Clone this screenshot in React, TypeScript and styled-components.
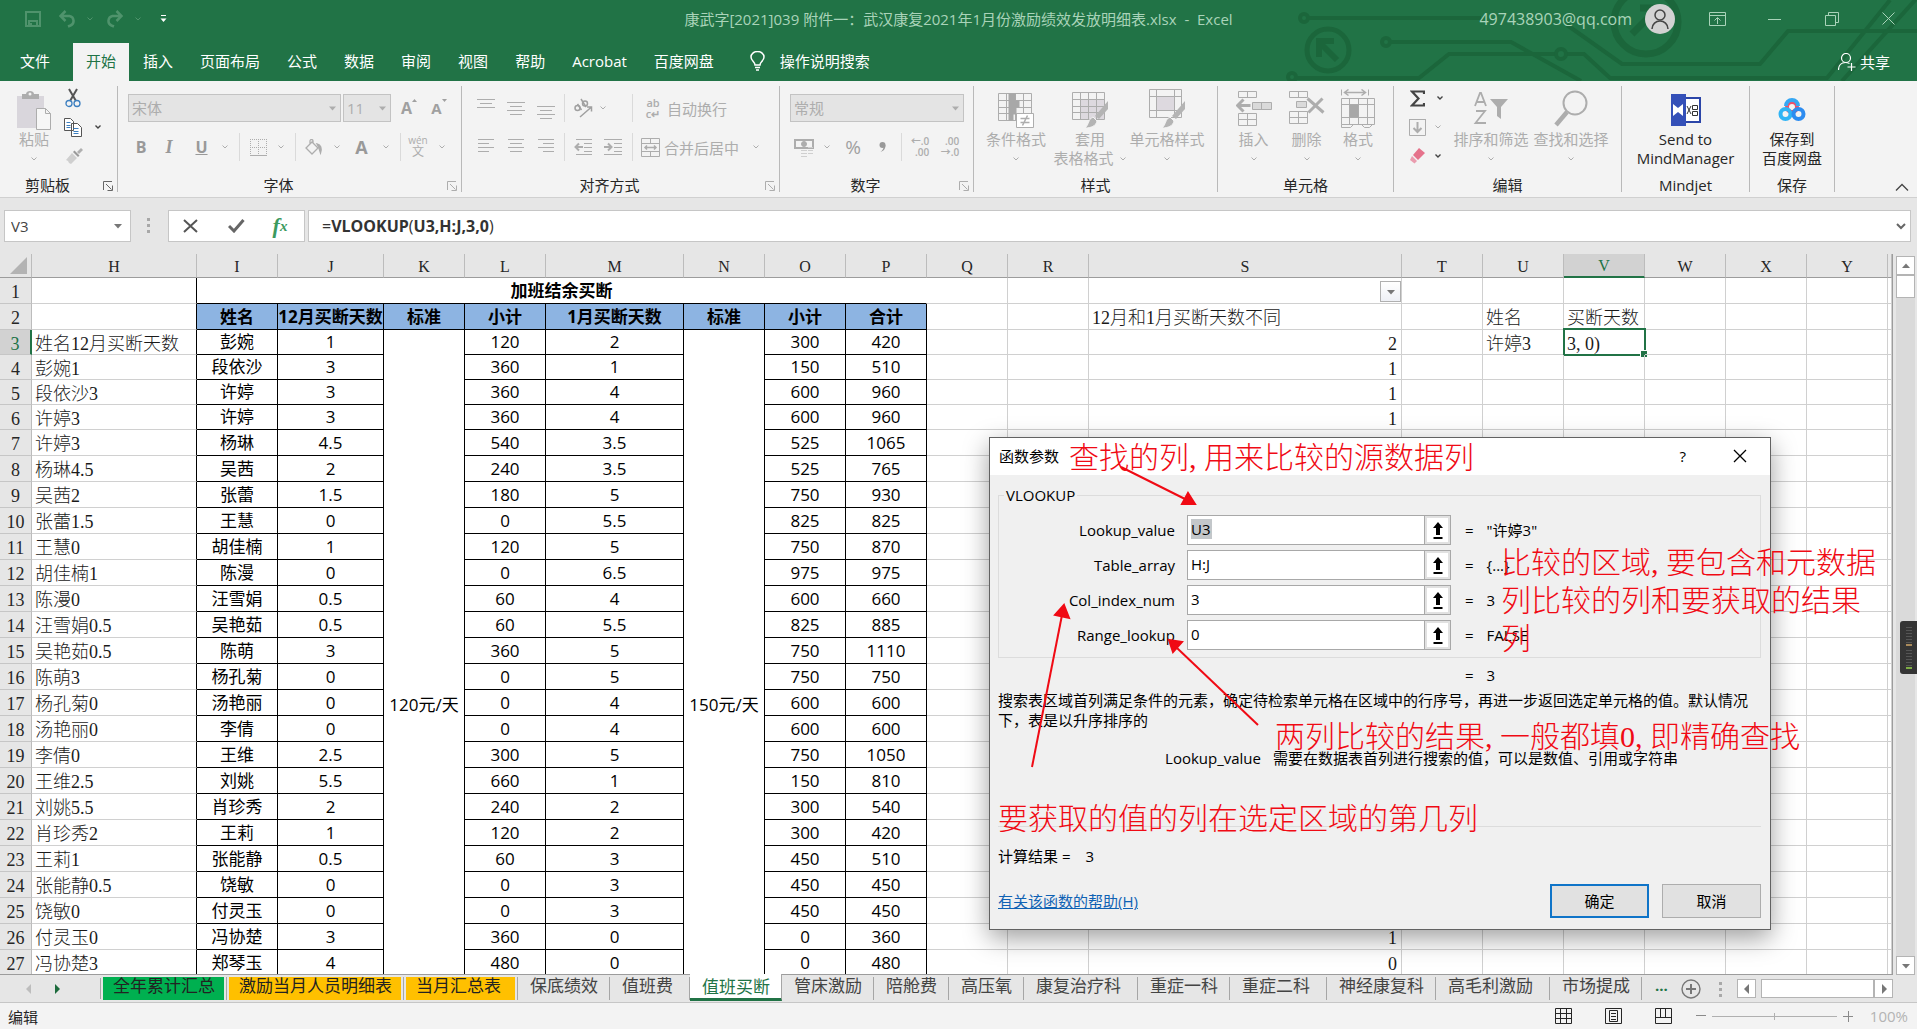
import React from "react";
import styled, { createGlobalStyle } from "styled-components";

const ui = `"Open Sans", "Noto Sans CJK SC", sans-serif`;
const song = `"Liberation Serif", "Noto Sans CJK SC", serif`;
const green = "#217346";
const dim = "#adadad";

const Global = createGlobalStyle`
  * { box-sizing: border-box; }
  body { margin: 0; background: #e6e6e6; font-family: ${ui}; font-size: 15px; color: #262626; overflow: hidden; }
  button, input, select { font: inherit; color: inherit; margin: 0; padding: 0; border: 0; background: none; border-radius: 0; }
  svg { display: block; flex: none; }
`;

const Window = styled.div`
  position: relative;
  display: flex;
  flex-direction: column;
  height: 100vh;
  overflow: hidden;
`;

/* ---------- title bar and ribbon tabs ---------- */
const Header = styled.header`
  position: relative;
  background: ${green};
  color: #fff;
`;
const Circuit = styled.svg`
  position: absolute;
  top: 0;
  right: 0;
`;
const TitleRow = styled.div`
  position: relative;
  display: grid;
  grid-template-columns: 1fr auto 1fr;
  align-items: center;
  height: 43px;
  padding-bottom: 6px;
  color: #a9d3b9;
`;
const Quick = styled.div`
  display: flex;
  align-items: center;
  padding-left: 16px;
`;
const Slot = styled.button<{ $w: number; $c?: string }>`
  width: ${(p) => p.$w}px;
  height: 28px;
  flex: none;
  display: flex;
  align-items: center;
  justify-content: center;
  color: ${(p) => p.$c || dim};
`;
const DocTitle = styled.div`
  white-space: pre;
`;
const Account = styled.div`
  display: flex;
  align-items: center;
  justify-content: flex-end;
`;
const Email = styled.span`
  font-size: 16px;
  line-height: 20px;
  margin-right: 13px;
`;
const Avatar = styled.span`
  width: 30px;
  height: 30px;
  border-radius: 50%;
  background: #d2d2d2;
  margin-right: 14px;
  display: grid;
  place-items: center;
`;
const TabRow = styled.nav`
  position: relative;
  display: flex;
  height: 38px;
  line-height: 34px;
`;
const RibbonTab = styled.button<{ $active?: boolean; $first?: boolean }>`
  padding: ${(p) => (p.$first ? "0 23px 2px 20px" : p.$active ? "0 13px 2px" : "0 13px 2px 14px")};
  background: ${(p) => (p.$active ? "#f3f3f3" : "transparent")};
  color: ${(p) => (p.$active ? green : "#fff")};
`;
const Tell = styled.button`
  display: flex;
  align-items: center;
  gap: 15px;
  margin-left: 23px;
  height: 36px;
`;
const Share = styled.button`
  display: flex;
  align-items: center;
  gap: 4px;
  margin-left: auto;
  padding-right: 27px;
`;

/* ---------- ribbon ---------- */
const Ribbon = styled.section`
  display: flex;
  height: 117px;
  background: #f3f3f3;
  border-bottom: 1px solid #d0d0d0;
  padding: 5px 0;
`;
const Group = styled.div<{ $w: number }>`
  position: relative;
  width: ${(p) => p.$w}px;
  flex: none;
  display: flex;
  flex-direction: column;
  border-right: 1px solid #b9b9b9;
`;
const GroupBody = styled.div<{ $pad?: number }>`
  flex: 1;
  min-height: 0;
  display: flex;
  align-items: flex-start;
  padding-left: ${(p) => p.$pad || 0}px;
`;
const GroupName = styled.div<{ $launch?: boolean }>`
  position: relative;
  text-align: center;
  line-height: 14px;
  height: 14px;
  padding-right: ${(p) => (p.$launch ? 22 : 0)}px;
  color: #262626;
`;
const Launch = styled.button`
  position: absolute;
  right: 4px;
  top: 3px;
`;
const Rows = styled.div`
  display: flex;
  flex-direction: column;
  gap: 11px;
  padding-top: 8px;
`;
const Row = styled.div`
  display: flex;
  align-items: center;
  height: 28px;
`;
const SmallColumn = styled.div`
  display: flex;
  flex-direction: column;
  gap: 5px;
`;
const SmallRow = styled.div`
  display: flex;
  height: 24px;
  align-items: center;
`;
const Combo = styled.span<{ $w: number }>`
  position: relative;
  width: ${(p) => p.$w}px;
  height: 28px;
  margin-right: 2px;
  display: flex;
  align-items: center;
  select {
    appearance: none;
    width: 100%;
    height: 28px;
    padding: 0 3px;
    line-height: 24px;
    border: 1px solid #c3c3c3;
    background: #e4e4e4;
    color: ${dim};
    opacity: 1;
  }
  svg {
    position: absolute;
    right: 5px;
  }
`;
const Sep = styled.i<{ $w: number }>`
  width: ${(p) => p.$w}px;
  height: 28px;
  flex: none;
  display: flex;
  justify-content: center;
  &::before {
    content: "";
    width: 1px;
    background: #dadada;
  }
`;
const Gap = styled.i`
  width: 18px;
`;
const Labelled = styled.button`
  display: flex;
  align-items: center;
  gap: 4px;
  height: 28px;
  padding-left: 4px;
  color: ${dim};
`;
const Big = styled.button<{ $w: number; $c?: string }>`
  width: ${(p) => p.$w}px;
  flex: none;
  padding-top: 3px;
  display: flex;
  flex-direction: column;
  align-items: center;
  line-height: 19px;
  white-space: nowrap;
  color: ${(p) => p.$c || dim};
`;
const BigIcon = styled.span`
  height: 41px;
  display: flex;
  align-items: center;
`;
const BigLine = styled.span`
  height: 19px;
  display: flex;
  align-items: center;
  gap: 5px;
`;
const Collapse = styled.button`
  margin: auto 8px 0 auto;
`;
const Glyph = styled.b<{ $size?: number; $italic?: boolean; $under?: boolean; $serif?: boolean }>`
  font-size: ${(p) => p.$size || 16}px;
  line-height: 20px;
  font-style: ${(p) => (p.$italic ? "italic" : "normal")};
  text-decoration: ${(p) => (p.$under ? "underline" : "none")};
  font-family: ${(p) => (p.$serif ? song : ui)};
`;
const Pinyin = styled.span`
  display: flex;
  flex-direction: column;
  align-items: center;
  span { font-size: 10px; line-height: 10px; }
  span + span { font-size: 12px; line-height: 14px; }
`;
const WrapMark = styled.span`
  width: 20px;
  display: flex;
  flex-direction: column;
  align-items: center;
  font-size: 11px;
  font-weight: 600;
  line-height: 11px;
`;
const Percent = styled.span`
  font-size: 19px;
`;
const Decimals = styled.span`
  display: flex;
  flex-direction: column;
  align-items: flex-end;
  font-size: 10px;
  font-weight: 600;
  line-height: 11px;
`;

/* ---------- formula bar ---------- */
const FormulaBar = styled.div`
  display: flex;
  height: 56px;
  padding: 12px 6px 12px 4px;
`;
const Box = styled.div<{ $w?: number }>`
  position: relative;
  ${(p) => (p.$w ? `width: ${p.$w}px;` : "flex: 1;")}
  height: 32px;
  display: flex;
  align-items: center;
  background: #fff;
  border: 1px solid #c6c6c6;
`;
const NameInput = styled.input`
  width: 100%;
  min-width: 0;
  padding: 0 6px 1px;
  color: #444;
`;
const Grip = styled.span<{ $m: string }>`
  width: 3px;
  height: 15px;
  margin: ${(p) => p.$m};
  background: repeating-linear-gradient(#a8a8a8 0 3px, transparent 3px 6px);
`;
const Formula = styled.div`
  flex: 1;
  padding: 0 0 1px 13px;
  font-size: 16px;
  line-height: 20px;
  color: #333;
`;
const Spacer = styled.i`
  width: 3px;
`;

/* ---------- sheet ---------- */
const Work = styled.main`
  flex: 1;
  min-height: 0;
  display: flex;
`;
const SheetPane = styled.div`
  flex: 1;
  min-width: 0;
  overflow: hidden;
  background: #fff;
  border-right: 1px solid #9c9c9c;
  border-bottom: 1px solid #9c9c9c;
`;
const Sheet = styled.table`
  table-layout: fixed;
  width: 100%;
  border-spacing: 0;
  font-family: ${song};
  font-size: 18px;
  line-height: 20px;
  color: #1a1a1a;
`;
const ColHead = styled.th<{ $on?: boolean }>`
  height: 24px;
  padding: 2px 0 0;
  font-size: 16px;
  font-weight: 400;
  background: ${(p) => (p.$on ? "#d2d2d2" : "#e6e6e6")};
  color: ${(p) => (p.$on ? green : "#262626")};
  border-right: 1px solid #bcbcbc;
  border-bottom: ${(p) => (p.$on ? `2px solid ${green}` : "1px solid #9c9c9c")};
`;
const RowHead = styled.th<{ $on?: boolean }>`
  padding: 3px 0 0;
  font-weight: 400;
  background: ${(p) => (p.$on ? "#d2d2d2" : "#e6e6e6")};
  color: ${(p) => (p.$on ? green : "#262626")};
  border-right: ${(p) => (p.$on ? `2px solid ${green}` : "1px solid #bcbcbc")};
  border-bottom: 1px solid #c6c6c6;
`;
const Corner = styled.svg`
  margin: 0 3px 3px auto;
`;
const Tr = styled.tr<{ $h: number }>`
  height: ${(p) => p.$h}px;
`;
const Cell = styled.td<{ $edge?: boolean; $right?: boolean }>`
  position: relative;
  padding: 3px 4px 0 3px;
  white-space: nowrap;
  font-weight: 300;
  text-align: ${(p) => (p.$right ? "right" : "left")};
  border-right: 1px solid ${(p) => (p.$edge ? "#000" : "#d0d0d0")};
  border-bottom: 1px solid #d0d0d0;
`;
const Framed = styled.td<{ $head?: boolean; $title?: boolean }>`
  padding: 0;
  font-family: ${ui};
  font-size: 17px;
  line-height: 20px;
  text-align: center;
  white-space: nowrap;
  color: #000;
  font-weight: ${(p) => (p.$head || p.$title ? 700 : 400)};
  background: ${(p) => (p.$head ? "#8db4e2" : "#fff")};
  border-right: 1px solid ${(p) => (p.$title ? "#fff" : "#000")};
  border-bottom: 1px solid #000;
`;
const FilterButton = styled.button`
  position: absolute;
  right: 0;
  top: 3px;
  width: 21px;
  height: 21px;
  display: grid;
  place-items: center;
  border: 1px solid #b0b0b0;
  background: linear-gradient(#fff, #eef0f5);
`;
const Selection = styled.span`
  position: absolute;
  left: -1px;
  top: -2px;
  right: -2px;
  bottom: -2px;
  border: 2px solid ${green};
  &::after {
    content: "";
    position: absolute;
    right: -3px;
    bottom: -3px;
    width: 6px;
    height: 6px;
    background: ${green};
    border: solid #fff;
    border-width: 1px 0 0 1px;
  }
`;
const VScroll = styled.div`
  width: 24px;
  padding: 2px 2px 0 3px;
  display: flex;
  flex-direction: column;
`;
const ScrollButton = styled.button`
  width: 19px;
  height: 19px;
  flex: none;
  display: grid;
  place-items: center;
  background: #fff;
  border: 1px solid #b4b4b4;
`;
const Track = styled.div`
  flex: 1;
  background: #dadada;
  &::before {
    content: "";
    display: block;
    height: 21px;
    background: #fff;
    border: 1px solid #b4b4b4;
  }
`;
const Meter = styled.div`
  position: absolute;
  right: 0;
  top: 621px;
  width: 17px;
  height: 53px;
  border-radius: 3px 0 0 3px;
  background: #353535;
  padding: 6px 5px 5px 6px;
  display: flex;
  flex-direction: column;
  justify-content: space-between;
`;
const Ticks = styled.i<{ $c: string }>`
  height: 19px;
  background: repeating-linear-gradient(#555 0 1px, transparent 1px 3px);
  border-bottom: 2px solid ${(p) => p.$c};
`;

/* ---------- sheet tabs ---------- */
const TabBar = styled.div`
  display: flex;
  height: 28px;
  border-bottom: 1px solid #c6c6c6;
`;
const TabNav = styled.div`
  width: 101px;
  flex: none;
  display: flex;
  align-items: center;
  gap: 18px;
  padding-left: 24px;
  margin-top: 3px;
  height: 21px;
  border-right: 1px solid #a6a6a6;
`;
const SheetTab = styled.button<{ $fill?: string; $wide?: boolean }>`
  flex: none;
  height: 23px;
  margin-top: 2px;
  padding: 0 2px;
  border-right: 1px solid #a6a6a6;
  font-size: 17px;
  line-height: 17px;
  color: ${(p) => (p.$fill ? "#222" : "#444")};
  span {
    display: block;
    height: 23px;
    padding: 0 ${(p) => (p.$wide ? 14 : 9)}px 0 10px;
    background: ${(p) => p.$fill || "none"};
  }
`;
const ActiveTab = styled(SheetTab)`
  position: relative;
  height: 27px;
  margin-top: -1px;
  padding-top: 3px;
  background: #fff;
  color: ${green};
  border-right: 1px solid #a6a6a6;
  border-bottom: 3px solid ${green};
  span { height: 20px; }
`;
const MoreTabs = styled.button`
  padding: 0 13px 8px;
  color: ${green};
  font-weight: 700;
`;
const HScroll = styled.div`
  display: flex;
  width: 156px;
  margin: 4px 24px 0 auto;
`;
const HThumb = styled.div`
  flex: 1;
  height: 19px;
  margin-left: 5px;
  background: #fff;
  border: 1px solid #b4b4b4;
`;
const StatusBar = styled.footer`
  display: flex;
  align-items: center;
  height: 26px;
  background: #f3f3f3;
  padding: 0 9px 0 8px;
`;
const Views = styled.div`
  display: flex;
  align-items: center;
  gap: 33px;
  margin-left: auto;
`;
const ZoomSlider = styled.div`
  display: flex;
  align-items: center;
  gap: 6px;
  margin: 0 17px 0 24px;
`;
const ZoomValue = styled.span`
  color: #b4b4b4;
`;

/* ---------- function arguments dialog ---------- */
const Dialog = styled.section`
  position: absolute;
  left: 989px;
  top: 437px;
  width: 782px;
  border: 1px solid #626262;
  background: #f0f0f0;
  box-shadow: 0 8px 24px rgba(0, 0, 0, 0.38);
  color: #000;
  line-height: 20px;
`;
const DialogTitle = styled.div`
  display: flex;
  align-items: center;
  height: 37px;
  padding: 0 23px 1px 9px;
  background: #fff;
`;
const DialogTools = styled.span`
  display: flex;
  align-items: center;
  gap: 47px;
  margin-left: auto;
`;
const DialogBody = styled.form`
  padding: 10px 9px 11px 8px;
`;
const Fieldset = styled.fieldset`
  margin: 0;
  padding: 10px 0 7px;
  border: 1px solid #dcdcdc;
  display: grid;
  gap: 5px;
  legend {
    margin-left: 5px;
    padding: 0 2px;
    height: 20px;
  }
`;
const Arg = styled.div`
  display: grid;
  grid-template-columns: 176px 237px 28px 1fr;
  height: 30px;
  label {
    text-align: right;
    padding: 5px 0 0;
  }
  input {
    margin-left: 12px;
    width: 238px;
    height: 30px;
    padding: 0 3px 3px;
    background: #fff;
    border: 1px solid #a8a8a8;
  }
`;
const SelectedInput = styled.input`
  && {
    background: linear-gradient(#c3c7ca, #c3c7ca) 3px 3px / 21px 20px no-repeat #fff;
  }
`;
const RefButton = styled.button`
  height: 30px;
  width: 27px;
  margin-left: 12px;
  display: grid;
  place-items: center;
  background: #fff;
  border: 3px solid #e1e1e1;
  outline: 1px solid #a8a8a8;
  outline-offset: -1px;
`;
const Equals = styled.div<{ $left: number }>`
  display: flex;
  gap: 13px;
  padding: 5px 0 0 ${(p) => p.$left}px;
`;
const ResultRow = styled.div`
  padding-top: 2px;
`;
const Description = styled.p`
  margin: 5px 0 18px;
`;
const ArgHelp = styled.div`
  display: grid;
  grid-template-columns: 263px 1fr;
  gap: 12px;
  span:first-child { text-align: right; }
`;
const Rule = styled.hr`
  margin: 58px 0 19px;
  border: 0;
  height: 1px;
  background: #dcdcdc;
`;
const Outcome = styled.div`
  display: flex;
  gap: 15px;
`;
const Actions = styled.div`
  display: flex;
  align-items: center;
  gap: 13px;
  margin-top: 18px;
  a { color: #0f62b4; margin-right: auto; }
`;
const Push = styled.button<{ $primary?: boolean }>`
  width: 99px;
  height: 34px;
  background: #e1e1e1;
  border: ${(p) => (p.$primary ? "2px solid #0f74c8" : "1px solid #adadad")};
`;
const Note = styled.p<{ $x: number; $y: number; $w?: number }>`
  position: absolute;
  left: ${(p) => p.$x}px;
  top: ${(p) => p.$y}px;
  width: ${(p) => (p.$w ? `${p.$w}px` : "max-content")};
  margin: 0;
  font: 300 30px/38px ${song};
  color: #f00a14;
`;
const Arrows = styled.svg`
  position: absolute;
  left: 0;
  top: 0;
  pointer-events: none;
`;

/* ---------- drawings ---------- */
const Svg = ({ w, h, sw = 1, children }: { w: number; h: number; sw?: number; children: React.ReactNode }) => (
  <svg width={w} height={h} viewBox={`0 0 ${w} ${h}`} fill="none" stroke="currentColor" strokeWidth={sw}>
    {children}
  </svg>
);
const Chevron = ({ c, sw = 1 }: { c?: string; sw?: number }) => (
  <svg width="8" height="6" viewBox="0 0 8 6" fill="none" stroke={c || "currentColor"} strokeWidth={sw}>
    <path d="M1.500 1.500L4 4l2.500-2.500" />
  </svg>
);
const Tri = ({ c = "#777", d = "down" }: { c?: string; d?: string }) => {
  const paths: Record<string, string> = {
    down: "M1 3h8L5 7.500z",
    up: "M1 7h8L5 2.500z",
    left: "M7 0v10L2 5z",
    right: "M3 0v10l5-5z",
  };
  return <svg width="10" height="10" viewBox="0 0 10 10" fill={c}><path d={paths[d]} /></svg>;
};
const SmallTri = () => <svg width="7" height="5" viewBox="0 0 7 5" fill="#adadad"><path d="M0 .5h7L3.500 4.500z" /></svg>;
const LaunchIcon = ({ c }: { c: string }) => (
  <svg width="10" height="10" viewBox="0 0 10 10" fill="none" stroke={c}>
    <path d="M.5 9V.5H9M3 3l5.500 5.500M9.500 4.500v5h-5" />
  </svg>
);
const Lines = ({ rows, y }: { rows: [number, number][]; y: number }) => (
  <Svg w={18} h={28}>
    {rows.map(([a, b], i) => <path key={i} d={`M${a} ${y + i * 4 + 0.5}H${b}`} />)}
  </Svg>
);
const Undo = ({ flip }: { flip?: boolean }) => (
  <svg width="18" height="18" viewBox="0 0 18 18" fill="none" stroke="#4f936c" strokeWidth="2.500" transform={flip ? "scale(-1 1)" : undefined}>
    <path d="M1.500 6h9a5 5 0 0 1 1 9.500L9 16.500M6.500 1L1.500 6l5 5" />
  </svg>
);
const Brush = () => (
  <g>
    <path d="M37 12v8l-9 10-4-3z" fill="#b4b4b4" stroke="none" />
    <path d="M22 28l4 4c-1 5-6 7-12 7 4-3 3-9 8-11z" fill="#b4b4b4" stroke="#f3f3f3" />
  </g>
);
const TableGrid = ({ x, y, w, h, cols, rows }: { x: number; y: number; w: number; h: number; cols: number; rows: number }) => {
  let d = "";
  for (let i = 0; i <= cols; i++) d += `M${x + Math.round((w * i) / cols)} ${y}v${h}`;
  for (let i = 0; i <= rows; i++) d += `M${x} ${y + Math.round((h * i) / rows)}h${w}`;
  return <path d={d} />;
};
const PickIcon = () => (
  <svg width="12" height="19" viewBox="0 0 12 19"><path d="M6 1l5 6H8v7H4V7H1zM1.500 16h9v2h-9z" fill="#000" /></svg>
);

const CircuitArt = () => (
  <Circuit width="677" height="81" viewBox="1240 0 677 81" fill="none" stroke="#1b663b" strokeWidth="4">
    <circle cx="1304" cy="18" r="4" /><path d="M1309 18h172" />
    <circle cx="1328" cy="50" r="21" strokeWidth="5" /><path d="M1337 60l-17-17m-1 14V41h15" strokeWidth="6" />
    <circle cx="1386" cy="42" r="4" /><path d="M1391 42h120l70 39" />
    <circle cx="1292" cy="77" r="4" /><path d="M1297 78h122l30-24h107m10 0h18l26 24h217l63-78" />
    <circle cx="1561" cy="54" r="5" />
    <circle cx="1646" cy="22" r="32" strokeWidth="7" /><path d="M1632 34l26-26M1640 8h18v20" strokeWidth="7" />
    <path d="M1567 25l55 39h138l28-33h129" /><path d="M1842 81l75-83" />
  </Circuit>
);

/* ---------- data ---------- */
type Person = [string, string, string, string, string, string];
const people: Person[] = [
  ["彭婉", "1", "120", "2", "300", "420"],
  ["段依沙", "3", "360", "1", "150", "510"],
  ["许婷", "3", "360", "4", "600", "960"],
  ["许婷", "3", "360", "4", "600", "960"],
  ["杨琳", "4.5", "540", "3.5", "525", "1065"],
  ["吴茜", "2", "240", "3.5", "525", "765"],
  ["张蕾", "1.5", "180", "5", "750", "930"],
  ["王慧", "0", "0", "5.5", "825", "825"],
  ["胡佳楠", "1", "120", "5", "750", "870"],
  ["陈漫", "0", "0", "6.5", "975", "975"],
  ["汪雪娟", "0.5", "60", "4", "600", "660"],
  ["吴艳茹", "0.5", "60", "5.5", "825", "885"],
  ["陈萌", "3", "360", "5", "750", "1110"],
  ["杨孔菊", "0", "0", "5", "750", "750"],
  ["汤艳丽", "0", "0", "4", "600", "600"],
  ["李倩", "0", "0", "4", "600", "600"],
  ["王维", "2.5", "300", "5", "750", "1050"],
  ["刘姚", "5.5", "660", "1", "150", "810"],
  ["肖珍秀", "2", "240", "2", "300", "540"],
  ["王莉", "1", "120", "2", "300", "420"],
  ["张能静", "0.5", "60", "3", "450", "510"],
  ["饶敏", "0", "0", "3", "450", "450"],
  ["付灵玉", "0", "0", "3", "450", "450"],
  ["冯协楚", "3", "360", "0", "0", "360"],
  ["郑琴玉", "4", "480", "0", "0", "480"],
];
const blankRows = 4;
const columns: [string, number][] = [
  ["H", 165], ["I", 81], ["J", 106], ["K", 81], ["L", 81], ["M", 138], ["N", 81], ["O", 81], ["P", 81],
  ["Q", 81], ["R", 81], ["S", 313], ["T", 81], ["U", 81], ["V", 81], ["W", 81], ["X", 81], ["Y", 81],
];
const differs: Record<number, string> = { 3: "2", 4: "1", 5: "1", 6: "1", 26: "1", 27: "0" };
const tabs: { name: string; fill?: string; wide?: boolean; active?: boolean }[] = [
  { name: "全年累计汇总", fill: "#00b050" },
  { name: "激励当月人员明细表", fill: "#ffc000" },
  { name: "当月汇总表", fill: "#ffc000", wide: true },
  { name: "保底绩效" },
  { name: "值班费", wide: true },
  { name: "值班买断", active: true },
  { name: "管床激励" },
  { name: "陪舱费" },
  { name: "高压氧" },
  { name: "康复治疗科", wide: true },
  { name: "重症一科" },
  { name: "重症二科", wide: true },
  { name: "神经康复科" },
  { name: "高毛利激励", wide: true },
  { name: "市场提成" },
];
const args: [string, string, string][] = [
  ["Lookup_value", "U3", "\"许婷3\""],
  ["Table_array", "H:J", "{...}"],
  ["Col_index_num", "3", "3"],
  ["Range_lookup", "0", "FALSE"],
];

const TopBar = () => (
  <Header>
    <CircuitArt />
    <TitleRow>
      <Quick>
        <Slot $w={34} $c="#4f936c" aria-label="保存"><Svg w={16} h={16} sw={2}><path d="M1 1h14v14H1zM4 15v-5h8v5" /><path d="M6 12v3" /></Svg></Slot>
        <Slot $w={36} aria-label="撤消"><Undo /></Slot>
        <Slot $w={8} $c="#4f936c" aria-label="撤消列表"><Chevron /></Slot>
        <Slot $w={40} aria-label="恢复"><Undo flip /></Slot>
        <Slot $w={8} $c="#4f936c" aria-label="恢复列表"><Chevron /></Slot>
        <Slot $w={42} $c="#fff" aria-label="自定义"><Svg w={7} h={8}><path d="M1 .5h5" /><path d="M.5 3.500h6l-3 3.500z" fill="currentColor" stroke="none" /></Svg></Slot>
      </Quick>
      <DocTitle>康武字[2021]039 附件一：武汉康复2021年1月份激励绩效发放明细表.xlsx  -  Excel</DocTitle>
      <Account>
        <Email>497438903@qq.com</Email>
        <Avatar><svg width="20" height="22" viewBox="0 0 20 22" fill="none" stroke="#444" strokeWidth="1.500"><circle cx="10" cy="7" r="5" /><path d="M2 21c0-5 4-8 8-8s8 3 8 8" /></svg></Avatar>
        <Slot $w={57} $c="#a9d3b9" aria-label="功能区显示选项"><Svg w={17} h={14}><path d="M.5.500h16v13H.5zM.5 3.500h16M8.500 12V6M5.500 8.500l3-3 3 3" /></Svg></Slot>
        <Slot $w={57} $c="#a9d3b9" aria-label="最小化"><Svg w={13} h={14}><path d="M0 7.500h13" /></Svg></Slot>
        <Slot $w={57} $c="#a9d3b9" aria-label="还原"><Svg w={14} h={14}><path d="M.5 3.500h10v10H.5zM3.500 3V.5h10v10H11" /></Svg></Slot>
        <Slot $w={57} $c="#a9d3b9" aria-label="关闭"><Svg w={13} h={13}><path d="M.5.500l12 12M12.500.500l-12 12" /></Svg></Slot>
      </Account>
    </TitleRow>
    <TabRow>
      <RibbonTab $first>文件</RibbonTab>
      <RibbonTab $active>开始</RibbonTab>
      {["插入", "页面布局", "公式", "数据", "审阅", "视图", "帮助", "Acrobat", "百度网盘"].map((t) => <RibbonTab key={t}>{t}</RibbonTab>)}
      <Tell>
        <svg width="15" height="20" viewBox="0 0 15 20" fill="none" stroke="#fff" strokeWidth="1.500"><path d="M5 14c0-3-4-4-4-8a6.500 5.500 0 0 1 13 0c0 4-4 5-4 8zM5 16.500h5M6 19h3" /></svg>
        操作说明搜索
      </Tell>
      <Share>
        <svg width="18" height="18" viewBox="0 0 18 18" fill="none" stroke="#fff" strokeWidth="1.200"><circle cx="8" cy="5" r="4.500" /><path d="M.5 17c0-5 3-7.500 7-7.500 2 0 3 .5 4 1M13.500 10v8M9.500 14h8" /></svg>
        共享
      </Share>
    </TabRow>
  </Header>
);

const RibbonBar = () => (
  <Ribbon>
    <Group $w={118}>
      <GroupBody $pad={13}>
        <Big $w={42}>
          <BigIcon><svg width="36" height="40" viewBox="0 0 36 40"><path d="M1 6h27v32H1z" fill="#d9d6dc" /><path d="M6 4h4c0-4 8-4 8 0h5v5H6z" fill="#adadad" /><circle cx="14" cy="4" r="1.500" fill="#f3f3f3" /><path d="M20.500 18.500h9l5 5v16h-14zM29.500 18.500v5h5" fill="#f6f6f6" stroke="#adadad" /></svg></BigIcon>
          <BigLine>粘贴</BigLine><BigLine><Chevron sw={1} /></BigLine>
        </Big>
        <SmallColumn>
          <SmallRow>
            <Slot $w={36} aria-label="剪切"><svg width="16" height="20" viewBox="0 0 16 20" fill="none"><path d="M4 1l7 12M12 1L5 13" stroke="#555" strokeWidth="2" /><circle cx="4" cy="15.500" r="3" stroke="#3c7fc0" strokeWidth="1.300" /><circle cx="12" cy="15.500" r="3" stroke="#3c7fc0" strokeWidth="1.300" /></svg></Slot>
          </SmallRow>
          <SmallRow>
            <Slot $w={36} aria-label="复制"><svg width="18" height="19" viewBox="0 0 18 19" fill="#fff" stroke="#555"><path d="M.5.500h6l3 3v9h-9zM7.500 5.500h6l4 4v9h-10z" /><path d="M2.500 4.500h4M2.500 7.500h4M2.500 9.500h4M9.500 10.500h5M9.500 13.500h5M9.500 15.500h5" stroke="#3c7fc0" /></svg></Slot>
            <Slot $w={14} $c="#444" aria-label="复制选项"><Chevron sw={1.4} /></Slot>
          </SmallRow>
          <SmallRow>
            <Slot $w={38} aria-label="格式刷"><svg width="18" height="16" viewBox="0 0 18 16"><path d="M1 12l6-7 5 5-6 6-2-1-1-2z" fill="#cfcfcf" /><path d="M8 4l5 5 1.500-1.500-5-5z" fill="#9a9a9a" /><path d="M12 4l4-4 2 2-4 4z" fill="#b0b0b0" /></svg></Slot>
          </SmallRow>
        </SmallColumn>
      </GroupBody>
      <GroupName $launch>剪贴板<Launch aria-label="剪贴板选项"><LaunchIcon c="#666" /></Launch></GroupName>
    </Group>

    <Group $w={344}>
      <GroupBody $pad={10}>
        <Rows>
          <Row>
            <Combo $w={213}><select aria-label="字体" disabled><option>宋体</option></select><SmallTri /></Combo>
            <Combo $w={48}><select aria-label="字号" disabled><option>11</option></select><SmallTri /></Combo>
            <Slot $w={32} $c="#a0a0a0" aria-label="增大字号"><Glyph>A</Glyph><Svg w={5} h={18}><path d="M0 3h5L2.500 0z" fill="currentColor" stroke="none" /></Svg></Slot>
            <Slot $w={28} $c="#a0a0a0" aria-label="减小字号"><Glyph $size={15}>A</Glyph><Svg w={5} h={18}><path d="M0 0h5L2.500 3z" fill="currentColor" stroke="none" /></Svg></Slot>
          </Row>
          <Row>
            <Slot $w={26} $c="#999" aria-label="加粗"><Glyph>B</Glyph></Slot>
            <Slot $w={30} $c="#999" aria-label="倾斜"><Glyph $italic $serif $size={18}>I</Glyph></Slot>
            <Slot $w={35} $c="#999" aria-label="下划线"><Glyph $under>U</Glyph></Slot>
            <Slot $w={12} aria-label="下划线选项"><Chevron /></Slot>
            <Sep $w={16} />
            <Slot $w={22} aria-label="边框"><svg width="17" height="17" viewBox="0 0 17 17" fill="none" stroke="#adadad"><path d="M.5 0v17M8.500 0v17M16.500 0v17M0 .5h17M0 8.500h17" strokeDasharray="1 1" /><path d="M0 16.500h17" /></svg></Slot>
            <Slot $w={24} aria-label="边框选项"><Chevron /></Slot>
            <Sep $w={4} />
            <Slot $w={34} aria-label="填充颜色"><svg width="18" height="17" viewBox="0 0 18 17" fill="none" stroke="#adadad" strokeWidth="1.300"><path d="M7 3l6 6-6 6-6-6zM5 6V2c0-2 3-2 3 0v3" /><path d="M12 5c4 1 5 4 3.500 9-1-3-1-5-3.500-9z" fill="#adadad" /></svg></Slot>
            <Slot $w={12} aria-label="填充选项"><Chevron /></Slot>
            <Slot $w={37} $c="#999" aria-label="字体颜色"><Glyph $size={18}>A</Glyph></Slot>
            <Slot $w={12} aria-label="颜色选项"><Chevron /></Slot>
            <Sep $w={16} />
            <Slot $w={20} aria-label="拼音"><Pinyin><span>wén</span><span>文</span></Pinyin></Slot>
            <Slot $w={28} aria-label="拼音选项"><Chevron /></Slot>
          </Row>
        </Rows>
      </GroupBody>
      <GroupName $launch>字体<Launch aria-label="字体选项"><LaunchIcon c={dim} /></Launch></GroupName>
    </Group>

    <Group $w={318}>
      <GroupBody $pad={9}>
        <Rows>
          <Row>
            <Slot $w={30} aria-label="顶端对齐"><Lines y={5} rows={[[0, 18], [3, 15], [0, 18]]} /></Slot>
            <Slot $w={30} aria-label="垂直居中"><Lines y={8} rows={[[0, 18], [3, 15], [0, 18], [3, 15]]} /></Slot>
            <Slot $w={30} aria-label="底端对齐"><Lines y={12} rows={[[0, 18], [3, 15], [0, 18], [3, 15]]} /></Slot>
            <Sep $w={6} />
            <Slot $w={32} aria-label="方向"><svg width="20" height="20" viewBox="0 0 20 20" fill="none" stroke="#a0a0a0" strokeWidth="1.500"><ellipse cx="4.500" cy="10" rx="2.500" ry="2.500" /><path d="M4.500 6l4 6M8 1l5 8" /><circle cx="12" cy="5.500" r="2.500" /><path d="M7 19L18.500 9m-4.500 0h4.500v4.500" /></svg></Slot>
            <Slot $w={8} aria-label="方向选项"><Chevron /></Slot>
            <Gap />
            <Sep $w={14} />
            <Labelled>
              <WrapMark><span>ab</span><span>c↵</span></WrapMark>
              自动换行
            </Labelled>
          </Row>
          <Row>
            <Slot $w={30} aria-label="左对齐"><Lines y={6} rows={[[1, 17], [1, 12], [1, 17], [1, 12]]} /></Slot>
            <Slot $w={30} aria-label="居中"><Lines y={6} rows={[[1, 17], [3, 15], [1, 17], [3, 15]]} /></Slot>
            <Slot $w={30} aria-label="右对齐"><Lines y={6} rows={[[1, 17], [6, 17], [1, 17], [6, 17]]} /></Slot>
            <Sep $w={6} />
            <Slot $w={31} aria-label="减少缩进"><Svg w={18} h={18}><path d="M2 1.500h16M10 5.500h8M10 9.500h8M10 13.500h8M2 16.500h16" /><path d="M1 9h8M5 5.500L1.500 9 5 12.500" strokeWidth="2" /></Svg></Slot>
            <Slot $w={30} aria-label="增加缩进"><Svg w={18} h={18}><path d="M0 1.500h18M10 5.500h8M10 9.500h8M10 13.500h8M0 16.500h18" /><path d="M0 9h8M4 5.500L7.500 9 4 12.500" strokeWidth="2" /></Svg></Slot>
            <Sep $w={9} />
            <Labelled>
              <Svg w={19} h={19}><path d="M.5.500h18v18H.5zM.5 5.500h18M.5 13.500h18M9.500.500v5M9.500 13.500v5" /><path d="M4 9.500h11M6 7.500l-2 2 2 2M13 7.500l2 2-2 2" strokeWidth="1.500" /></Svg>
              合并后居中
            </Labelled>
            <Slot $w={34} aria-label="合并选项"><Chevron /></Slot>
          </Row>
        </Rows>
      </GroupBody>
      <GroupName $launch>对齐方式<Launch aria-label="对齐选项"><LaunchIcon c={dim} /></Launch></GroupName>
    </Group>

    <Group $w={194}>
      <GroupBody $pad={10}>
        <Rows>
          <Row><Combo $w={174}><select aria-label="数字格式" disabled><option>常规</option></select><SmallTri /></Combo></Row>
          <Row>
            <Slot $w={28} aria-label="会计数字格式"><svg width="20" height="19" viewBox="0 0 20 19" fill="none" stroke="#adadad"><path d="M1 2h18v8H1z" strokeWidth="2" /><circle cx="10" cy="6" r="2.500" fill="#adadad" /><path d="M7 12.500h6M7 15.500h6M7 18.500h6M14 9.500h5M14 12.500h5M14 15.500h5" stroke="#cfcfcf" /></svg></Slot>
            <Slot $w={18} aria-label="会计选项"><Chevron /></Slot>
            <Slot $w={34} $c="#a0a0a0" aria-label="百分比"><Percent>%</Percent></Slot>
            <Slot $w={24} $c="#a0a0a0" aria-label="千位分隔"><svg width="7" height="10" viewBox="0 0 7 10" fill="#999"><circle cx="3.500" cy="3" r="3" /><path d="M6.500 3c0 4-2 6-5 7 2-2 3-3 3-5z" /></svg></Slot>
            <Sep $w={14} />
            <Slot $w={24} aria-label="增加小数位数"><Decimals><span>←.0</span><span>.00</span></Decimals></Slot>
            <Slot $w={36} aria-label="减少小数位数"><Decimals><span>.00</span><span>→.0</span></Decimals></Slot>
          </Row>
        </Rows>
      </GroupBody>
      <GroupName $launch>数字<Launch aria-label="数字选项"><LaunchIcon c={dim} /></Launch></GroupName>
    </Group>

    <Group $w={244}>
      <GroupBody $pad={6}>
        <Big $w={72}>
          <BigIcon><Svg w={38} h={42}><g transform="translate(.5 .5)"><TableGrid x={1} y={4} w={33} h={27} cols={4} rows={4} /><path d="M11 4h7v7h-7zM11 11h11v7H11zM11 18h8v7h-8zM11 25h5v6h-5z" fill="#a8a8a8" stroke="none" /><path d="M19 24h17v14H19z" fill="#fff" /><path d="M23 29h9M23 33h9M30 26l-5 10" strokeWidth="1.500" /></g></Svg></BigIcon>
          <BigLine>条件格式</BigLine><BigLine><Chevron /></BigLine>
        </Big>
        <Big $w={76}>
          <BigIcon><Svg w={38} h={42}><path d="M9 10h24v20H9z" fill="#ddd9df" stroke="none" /><g transform="translate(.5 .5)"><TableGrid x={1} y={3} w={32} h={27} cols={4} rows={4} /></g><Brush /></Svg></BigIcon>
          <BigLine>套用</BigLine><BigLine>表格格式<Chevron /></BigLine>
        </Big>
        <Big $w={78}>
          <BigIcon><Svg w={38} h={42}><g transform="translate(.5 .5)"><path d="M1 0h32v28H1zM1 7h32M1 21h32M8 0v28M26 0v28" /></g><path d="M9 8h17v13H9z" fill="#ddd9df" stroke="none" /><Brush /></Svg></BigIcon>
          <BigLine>单元格样式</BigLine><BigLine><Chevron /></BigLine>
        </Big>
      </GroupBody>
      <GroupName>样式</GroupName>
    </Group>

    <Group $w={176}>
      <GroupBody $pad={9}>
        <Big $w={53}>
          <BigIcon><Svg w={36} h={42}><g transform="translate(.5 .5)"><TableGrid x={2} y={2} w={18} h={6} cols={2} rows={1} /><TableGrid x={2} y={24} w={18} h={12} cols={2} rows={2} /><path d="M16 13h19v7H16zM25 13v7" fill="#dadada" /><path d="M1 16h13M7 10l-6 6 6 6" strokeWidth="3" /></g></Svg></BigIcon>
          <BigLine>插入</BigLine><BigLine><Chevron /></BigLine>
        </Big>
        <Big $w={53}>
          <BigIcon><Svg w={36} h={42}><g transform="translate(.5 .5)"><TableGrid x={0} y={2} w={18} h={6} cols={2} rows={1} /><TableGrid x={0} y={22} w={18} h={12} cols={2} rows={2} /><path d="M7 12h10v6H7z" fill="#dadada" /><path d="M18 9l16 14M33 9L19 23" strokeWidth="3" /></g></Svg></BigIcon>
          <BigLine>删除</BigLine><BigLine><Chevron /></BigLine>
        </Big>
        <Big $w={50}>
          <BigIcon><Svg w={36} h={42}><g transform="translate(.5 .5)"><path d="M1 0v6M28 0v6" /><path d="M4 3h21M8 0L4 3l4 3M21 0l4 3-4 3" strokeWidth="1.500" /><path d="M1 9h33v26H1zM1 15h33M1 28h33M9 9v26M18 9v26M27 9v26" /><path d="M9 15h9v13H9z" fill="#a8a8a8" stroke="none" /><path d="M1 35v3h9l3-3h8l3 3h5l3-3" /></g></Svg></BigIcon>
          <BigLine>格式</BigLine><BigLine><Chevron /></BigLine>
        </Big>
      </GroupBody>
      <GroupName>单元格</GroupName>
    </Group>

    <Group $w={228}>
      <GroupBody $pad={12}>
        <SmallColumn>
          <SmallRow><Slot $w={22} aria-label="求和"><svg width="15" height="17" viewBox="0 0 15 17" fill="none" stroke="#444" strokeWidth="2.200"><path d="M14 4V1.500H2L8.500 8.500 2 15.500h12V13" /></svg></Slot><Slot $w={24} $c="#444" aria-label="求和选项"><Chevron sw={1.4} /></Slot></SmallRow>
          <SmallRow><Slot $w={22} aria-label="填充"><svg width="17" height="18" viewBox="0 0 17 18" fill="none" stroke="#adadad"><path d="M.5 1v16.500h16V1M0 1.500h17" /><path d="M8.500 4v10M4.500 10l4 4 4-4" strokeWidth="2" /></svg></Slot><Slot $w={20} aria-label="填充选项"><Chevron /></Slot></SmallRow>
          <SmallRow><Slot $w={22} aria-label="清除"><svg width="17" height="16" viewBox="0 0 17 16"><path d="M10 0l6 5-7 7-5-5z" fill="#e5728b" /><path d="M3 8l5 5-2.500 2.500L1 12z" fill="#ea9cae" /></svg></Slot><Slot $w={20} $c="#444" aria-label="清除选项"><Chevron sw={1.4} /></Slot></SmallRow>
        </SmallColumn>
        <Big $w={78}>
          <BigIcon><Svg w={36} h={42}><g strokeWidth="1.800"><path d="M2 17L7 4h1l5 13M4 13h7M3 22h9L2.500 34H13" /></g><path d="M17 10h18l-7 8v12l-4-3v-9z" fill="#adadad" stroke="none" /></Svg></BigIcon>
          <BigLine>排序和筛选</BigLine><BigLine><Chevron /></BigLine>
        </Big>
        <Big $w={82}>
          <BigIcon><Svg w={36} h={42}><circle cx="22" cy="14" r="11.500" strokeWidth="2" /><path d="M14 23L3 36" strokeWidth="4.500" /></Svg></BigIcon>
          <BigLine>查找和选择</BigLine><BigLine><Chevron /></BigLine>
        </Big>
      </GroupBody>
      <GroupName>编辑</GroupName>
    </Group>

    <Group $w={128}>
      <GroupBody>
        <Big $w={127} $c="#262626">
          <BigIcon><svg width="30" height="32" viewBox="0 0 30 32"><path d="M14 4h15v24H14z" fill="#fff" stroke="#2b45a8" strokeWidth="2" /><path d="M0 0h15v32H0z" fill="#3450b8" /><path d="M2 10l5 4 5-4v12l-5-4-5 4z" fill="#fff" /><path d="M16 12l4 8M16 20l4-8M21.500 11.500h5v4h-5zM21.500 17.500h5v4h-5z" fill="none" stroke="#333" /></svg></BigIcon>
          <BigLine>Send to</BigLine><BigLine>MindManager</BigLine>
        </Big>
      </GroupBody>
      <GroupName>Mindjet</GroupName>
    </Group>

    <Group $w={85}>
      <GroupBody>
        <Big $w={84} $c="#262626">
          <BigIcon><svg width="28" height="24" viewBox="0 0 28 24" fill="none" strokeWidth="4"><circle cx="14" cy="9" r="5" stroke="#ef4f6a" /><circle cx="7.500" cy="16" r="5" stroke="#2fb4f5" /><circle cx="20.500" cy="16" r="5" stroke="#2d8cf0" /><path d="M8 8a6 6 0 0 1 12 0" stroke="#35a7f3" /></svg></BigIcon>
          <BigLine>保存到</BigLine><BigLine>百度网盘</BigLine>
        </Big>
      </GroupBody>
      <GroupName>保存</GroupName>
    </Group>
    <Collapse aria-label="折叠功能区"><svg width="14" height="9" viewBox="0 0 14 9" fill="none" stroke="#444" strokeWidth="1.300"><path d="M1 7.500L7 1.500l6 6" /></svg></Collapse>
  </Ribbon>
);

const Formulas = () => (
  <FormulaBar>
    <Box $w={127}><NameInput aria-label="名称框" defaultValue="V3" /><Slot $w={24} aria-label="名称列表"><Tri /></Slot></Box>
    <Grip $m="8px 18px 0 16px" />
    <Box $w={137}>
      <Slot $w={44} aria-label="取消"><svg width="16" height="14" viewBox="0 0 16 14" stroke="#555" strokeWidth="2"><path d="M1 1l13 12M14 1L1 13" /></svg></Slot>
      <Slot $w={46} aria-label="输入"><svg width="17" height="14" viewBox="0 0 17 14" fill="none" stroke="#666" strokeWidth="3"><path d="M1 7l5 5L15.500 1" /></svg></Slot>
      <Slot $w={42} $c="#3c9a5f" aria-label="插入函数"><Glyph $serif $italic $size={22}>f</Glyph><Glyph $serif $italic $size={15}>x</Glyph></Slot>
    </Box>
    <Spacer />
    <Box>
      <Formula>=<b>VLOOKUP</b>(<b>U3,H:J,3,0</b>)</Formula>
      <Slot $w={18} $c="#666" aria-label="展开编辑栏"><svg width="10" height="7" viewBox="0 0 10 7" fill="none" stroke="#666" strokeWidth="2"><path d="M1 1l4 4 4-4" /></svg></Slot>
    </Box>
  </FormulaBar>
);

const SheetTable = () => (
  <Sheet>
    <colgroup>
      <col width={32} />
      {columns.map(([n, w]) => <col key={n} width={w} />)}
      <col />
    </colgroup>
    <thead>
      <tr>
        <ColHead aria-label="全选"><Corner width="18" height="17" viewBox="0 0 18 17"><path d="M17 0v17H0z" fill="#b3b3b3" /></Corner></ColHead>
        {columns.map(([n]) => <ColHead key={n} $on={n === "V"}>{n}</ColHead>)}
        <ColHead />
      </tr>
    </thead>
    <tbody>
      <Tr $h={26}>
        <RowHead>1</RowHead><Cell $edge />
        <Framed $title colSpan={8}>加班结余买断</Framed>
        <Cell /><Cell />
        <Cell><FilterButton aria-label="筛选"><Tri /></FilterButton></Cell>
        {Array.from({ length: 7 }, (_, i) => <Cell key={i} />)}
      </Tr>
      <Tr $h={26}>
        <RowHead>2</RowHead><Cell $edge />
        {["姓名", "12月买断天数", "标准", "小计", "1月买断天数", "标准", "小计", "合计"].map((t, i) => <Framed key={i} $head>{t}</Framed>)}
        <Cell /><Cell /><Cell>12月和1月买断天数不同</Cell><Cell /><Cell>姓名</Cell><Cell>买断天数</Cell>
        <Cell /><Cell /><Cell /><Cell />
      </Tr>
      {people.map((p, i) => {
        const n = i + 3;
        const prev = people[i - 1];
        return (
          <Tr key={n} $h={n < 7 ? 25 : 26}>
            <RowHead $on={n === 3}>{n}</RowHead>
            <Cell $edge>{prev ? prev[0] + prev[1] : "姓名12月买断天数"}</Cell>
            <Framed>{p[0]}</Framed><Framed>{p[1]}</Framed>
            {i === 0 && <Framed rowSpan={people.length + blankRows}>120元/天</Framed>}
            <Framed>{p[2]}</Framed><Framed>{p[3]}</Framed>
            {i === 0 && <Framed rowSpan={people.length + blankRows}>150元/天</Framed>}
            <Framed>{p[4]}</Framed><Framed>{p[5]}</Framed>
            <Cell /><Cell /><Cell $right>{differs[n]}</Cell><Cell />
            <Cell>{n === 3 ? "许婷3" : null}</Cell>
            <Cell>{n === 3 ? <>3, 0)<Selection /></> : null}</Cell>
            <Cell /><Cell /><Cell /><Cell />
          </Tr>
        );
      })}
      {Array.from({ length: blankRows }, (_, i) => (
        <Tr key={i} $h={26}>
          <RowHead /><Cell $edge /><Framed /><Framed /><Framed /><Framed /><Framed /><Framed />
          {Array.from({ length: 10 }, (_, j) => <Cell key={j} />)}
        </Tr>
      ))}
    </tbody>
  </Sheet>
);

const FunctionDialog = () => (
  <Dialog role="dialog" aria-label="函数参数">
    <DialogTitle>
      函数参数
      <DialogTools>
        <button aria-label="帮助">?</button>
        <button aria-label="关闭"><Svg w={14} h={14} sw={1.3}><path d="M1 1l12 12M13 1L1 13" /></Svg></button>
      </DialogTools>
    </DialogTitle>
    <DialogBody onSubmit={(e) => e.preventDefault()}>
      <Fieldset>
        <legend>VLOOKUP</legend>
        {args.map(([name, value, result], i) => (
          <Arg key={name}>
            <label htmlFor={name}>{name}</label>
            {i === 0
              ? <SelectedInput id={name} defaultValue={value} />
              : <input id={name} defaultValue={value} />}
            <RefButton type="button" aria-label={`选择 ${name}`}><PickIcon /></RefButton>
            <Equals $left={25}><span>=</span><span>{result}</span></Equals>
          </Arg>
        ))}
      </Fieldset>
      <ResultRow><Equals $left={467}><span>=</span><span>3</span></Equals></ResultRow>
      <Description>搜索表区域首列满足条件的元素，确定待检索单元格在区域中的行序号，再进一步返回选定单元格的值。默认情况下，表是以升序排序的</Description>
      <ArgHelp><span>Lookup_value</span><span>需要在数据表首列进行搜索的值，可以是数值、引用或字符串</span></ArgHelp>
      <Rule />
      <Outcome><span>计算结果 =</span><span>3</span></Outcome>
      <Actions>
        <a href="#help">有关该函数的帮助(H)</a>
        <Push $primary>确定</Push>
        <Push type="button">取消</Push>
      </Actions>
    </DialogBody>
    <Note $x={79} $y={1}>查找的列, 用来比较的源数据列</Note>
    <Note $x={511} $y={106} $w={385}>比较的区域, 要包含和元数据列比较的列和要获取的结果列</Note>
    <Note $x={285} $y={280}>两列比较的结果, 一般都填0, 即精确查找</Note>
    <Note $x={8} $y={362}>要获取的值的列在选定区域的第几列</Note>
    <Arrows width="780" height="491" viewBox="990 438 780 491" stroke="#f00a14" strokeWidth="2" fill="#f00a14">
      <path d="M1121 467L1187 500" /><path d="M1195 504h-13l6-11z" />
      <path d="M1258 725L1177 648" /><path d="M1169 640l13 2-9 10z" />
      <path d="M1032 767L1062 615" /><path d="M1064 605l5 13-14-3z" />
    </Arrows>
  </Dialog>
);

export default function App() {
  return (
    <Window>
      <Global />
      <TopBar />
      <RibbonBar />
      <Formulas />
      <Work>
        <SheetPane><SheetTable /></SheetPane>
        <VScroll>
          <ScrollButton aria-label="向上"><Tri d="up" /></ScrollButton>
          <Track />
          <ScrollButton aria-label="向下"><Tri /></ScrollButton>
        </VScroll>
      </Work>
      <TabBar>
        <TabNav><Tri d="left" c="#bdbdbd" /><Tri d="right" c="#1c6b3d" /></TabNav>
        {tabs.map((t) => {
          const T = t.active ? ActiveTab : SheetTab;
          return <T key={t.name} $fill={t.fill} $wide={t.wide}><span>{t.name}</span></T>;
        })}
        <MoreTabs aria-label="更多工作表">...</MoreTabs>
        <Slot $w={20} $c="#777" aria-label="新工作表"><Svg w={20} h={20} sw={1.4}><circle cx="10" cy="10" r="9" /><path d="M10 5v10M5 10h10" strokeWidth="2" /></Svg></Slot>
        <Grip $m="7px 0 0 18px" />
        <HScroll>
          <ScrollButton aria-label="向左"><Tri d="left" /></ScrollButton>
          <HThumb />
          <ScrollButton aria-label="向右"><Tri d="right" /></ScrollButton>
        </HScroll>
      </TabBar>
      <StatusBar>
        编辑
        <Views>
          <Svg w={17} h={16}><path d="M.5.500h16v15H.5zM.5 5.500h16M.5 10.500h16M5.500.500v15M11.500.500v15" /></Svg>
          <Svg w={17} h={16}><path d="M.5.500h16v15H.5zM4.500 2.500h8v11h-8zM6 5.500h5M6 8.500h5M6 11.500h5" /></Svg>
          <Svg w={17} h={16}><path d="M.5.500h16v15H.5zM5.500.500v9h5v-9M.5 9.500h16" /></Svg>
        </Views>
        <ZoomSlider>
          <Svg w={10} h={11}><path d="M0 4.500h10" stroke="#8a8a8a" /></Svg>
          <Svg w={125} h={11}><path d="M0 5.500h125M62.500 2v7" stroke="#b0b0b0" /></Svg>
          <Svg w={10} h={11}><path d="M0 5.500h10M5.500 0v11" stroke="#8a8a8a" /></Svg>
        </ZoomSlider>
        <ZoomValue>100%</ZoomValue>
      </StatusBar>
      <FunctionDialog />
      <Meter><Ticks $c="#a98a5a" /><Ticks $c="#7fae45" /></Meter>
    </Window>
  );
}
